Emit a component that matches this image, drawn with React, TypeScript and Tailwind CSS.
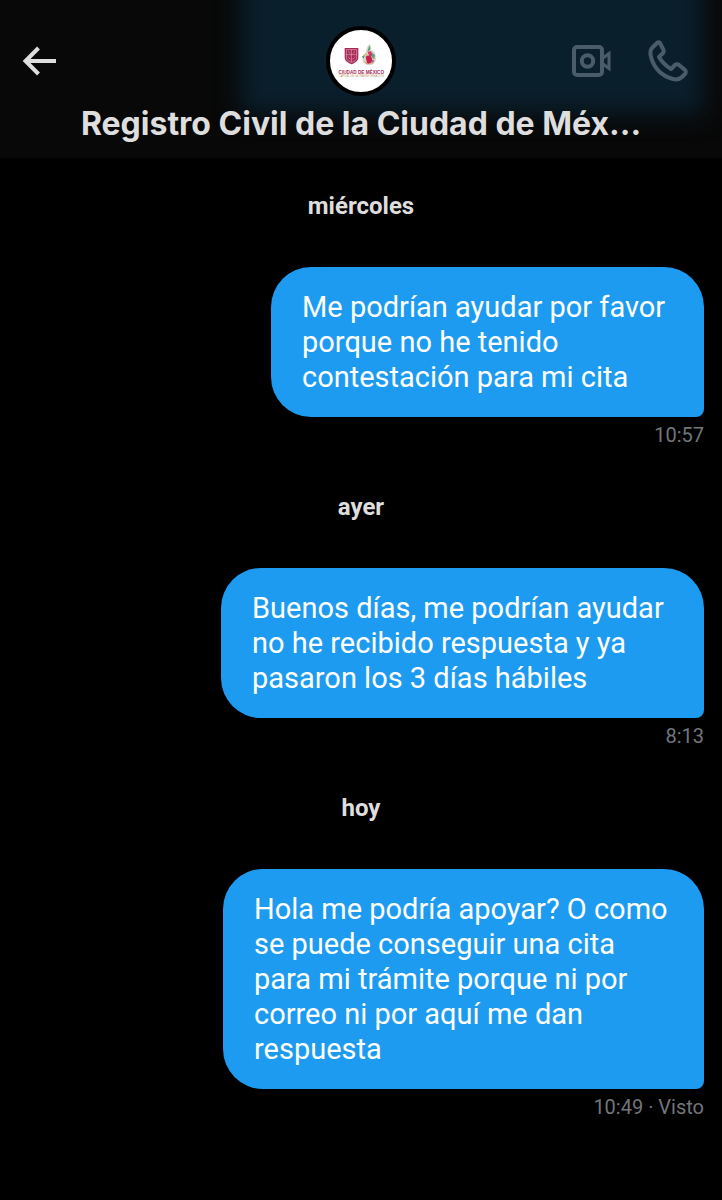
import React from "react";

type Message = {
  day: string;
  lines: string[];
  time: string;
  width: string;
};

const messages: Message[] = [
  {
    day: "miércoles",
    lines: [
      "Me podrían ayudar por favor",
      "porque no he tenido",
      "contestación para mi cita",
    ],
    time: "10:57",
    width: "w-[433px]",
  },
  {
    day: "ayer",
    lines: [
      "Buenos días, me podrían ayudar",
      "no he recibido respuesta y ya",
      "pasaron los 3 días hábiles",
    ],
    time: "8:13",
    width: "w-[483px]",
  },
  {
    day: "hoy",
    lines: [
      "Hola me podría apoyar? O como",
      "se puede conseguir una cita",
      "para mi trámite porque ni por",
      "correo ni por aquí me dan",
      "respuesta",
    ],
    time: "10:49 · Visto",
    width: "w-[481px]",
  },
];

const BackIcon = () => (
  <svg width="36" height="32" viewBox="0 0 36 32" fill="none" stroke="#dedede" strokeWidth="4">
    <path d="M34 16H4M16.500 3L3.500 16l13 13" />
  </svg>
);

const VideoIcon = () => (
  <svg width="40" height="32" viewBox="0 0 40 32" fill="none" stroke="#4a5c6a" strokeWidth="4">
    <rect x="2" y="2" width="28" height="28" rx="3" />
    <circle cx="15.500" cy="16" r="5.700" />
    <path d="M31 13l6-4.500v15l-6-4.500" strokeWidth="3" />
  </svg>
);

const PhoneIcon = () => (
  <svg width="40" height="42" viewBox="0 0 40 42" fill="none" stroke="#4a5c6a" strokeWidth="4" strokeLinejoin="round">
    <path d="M9 3L4 8C2 10 2 13 3 17C6 28 14 36 25 39C29 40 32 39 34 37L37 34C38 33 38 31 37 30L31 25C30 24 28 24 27 25L23 29C18 26 14 22 11 17L15 13C16 12 16 10 15 9L12 3C11 2 10 2 9 3Z" />
  </svg>
);

const Avatar = () => (
  <svg
    viewBox="0 0 186 186"
    className="size-[70px] rounded-full border-4 border-black bg-white"
    role="img"
    aria-label="Ciudad de México"
  >
    <path d="M44 54H85V82C85 94 76 98 65 103C53 98 44 94 44 82Z" fill="#a52855" />
    <path
      d="M49 59H80V82C80 91 73 94 65 97C56 94 49 91 49 82ZM64 59V97M49 74H80M54 64l7 6M75 64l-7 6M54 80l7 9M75 80l-7 9"
      fill="none"
      stroke="#e3a5ba"
      strokeWidth="2"
    />
    <path d="M118 43C124 48 126 55 123 61C133 62 138 72 137 82C140 92 134 102 124 105C115 109 103 104 99 94C95 84 98 72 108 69C109 58 110 50 118 43Z" fill="#d9d6c9" />
    <path d="M118 46l3 12-9 9ZM100 86l-4-7 9-4Z" fill="#559a72" />
    <path d="M113 66l10-3 5 13-9 5Z" fill="#d83562" />
    <path d="M107 80q9-7 17 0l4 13q-8 12-17 7Z" fill="#c81f4b" />
    <path d="M126 68l9 8-3 12-7-7Z" fill="#4ba48a" />
    <path d="M133 90l-5 11-4-8Z" fill="#9165a0" />
    <path d="M103 94l9 9M106 70l7 8M121 100l7-3M129 83l6 2" stroke="#d99842" strokeWidth="3" />
    <text x="94" y="131" textAnchor="middle" fontFamily="Liberation Sans" fontWeight="700" fontSize="14" fill="#a52855">
      CIUDAD DE MÉXICO
    </text>
    <text x="94" y="142" textAnchor="middle" fontFamily="Liberation Sans" fontSize="8" fill="#c39a6b">
      CAPITAL DE LA TRANSFORMACIÓN
    </text>
  </svg>
);

const Header = () => (
  <header className="relative h-[158px] overflow-hidden bg-[#080808] px-[22px] pt-[26px]">
    {/* Glow of the bubble that is scrolled under the bar */}
    <div className="absolute -top-10 right-[18px] left-[240px] h-[154px] bg-[#0a1f2c] blur-[12px]" />

    <div className="relative grid grid-cols-3 items-center">
      <button type="button" aria-label="Atrás" className="justify-self-start">
        <BackIcon />
      </button>

      <div className="justify-self-center">
        <Avatar />
      </div>

      <div className="flex items-center gap-9 justify-self-end pr-3">
        <button type="button" aria-label="Videollamada">
          <VideoIcon />
        </button>
        <button type="button" aria-label="Llamada">
          <PhoneIcon />
        </button>
      </div>
    </div>

    <h1 className="relative mt-2 text-center text-[32px] leading-10 font-bold whitespace-nowrap text-[#dedede] font-['Inter',sans-serif]">
      Registro Civil de la Ciudad de Méx...
    </h1>
  </header>
);

const App = () => {
  return (
    <div className="min-h-screen bg-black font-['Roboto',sans-serif]">
      <Header />

      <main className="pt-8 pr-[18px] pl-[18px]">
        {messages.map((message) => (
          <section key={message.day} className="flex flex-col items-end pb-11">
            <h2 className="w-full text-center text-2xl leading-8 font-bold text-[#dedede]">
              {message.day}
            </h2>

            <p
              className={`${message.width} mt-[45px] max-w-full rounded-[40px] rounded-br-lg bg-[#1d9bf0] pt-[23px] pb-[22px] pl-[31px] text-[29px] leading-[35px] whitespace-pre-line text-white`}
            >
              {message.lines.join("\n")}
            </p>

            <p className="mt-1.5 text-xl leading-6 text-[#71767b]">
              {message.time}
            </p>
          </section>
        ))}
      </main>
    </div>
  );
};

export default App;
